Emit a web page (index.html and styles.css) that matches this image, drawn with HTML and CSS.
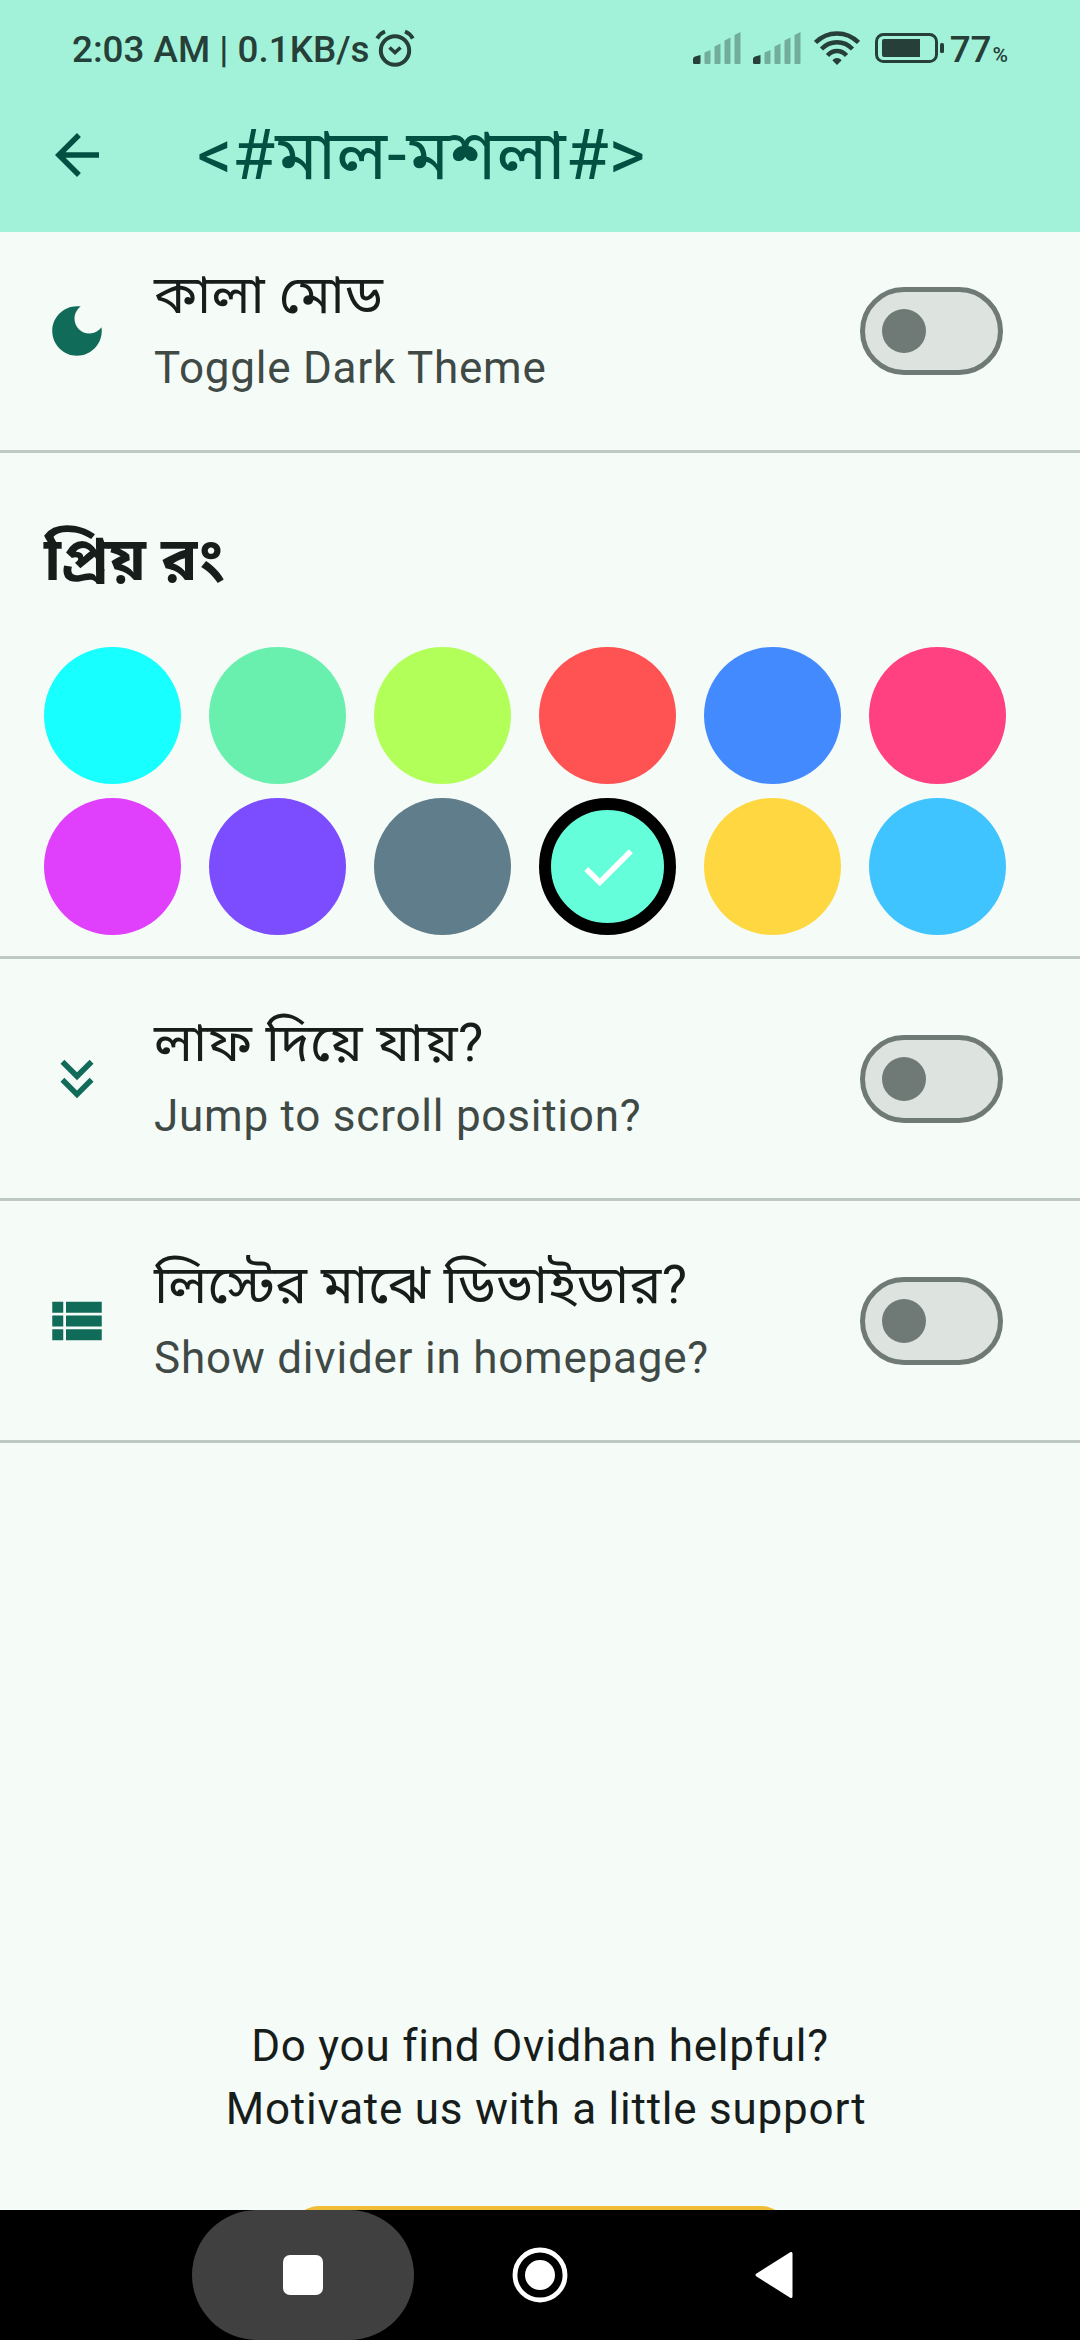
FILE: index.html
```html
<!DOCTYPE html>
<html lang="bn">
<head>
  <meta charset="UTF-8">
  <meta name="viewport" content="width=device-width, initial-scale=1.0">
  <title>Settings</title>
  <link rel="stylesheet" href="styles.css">
</head>
<body>
  <header class="header">
    <div class="status-bar">
      <span class="status-text">2:03 AM | 0.1KB/s</span>
      <svg class="alarm" width="40" height="38" viewBox="0 0 40 38" fill="none" stroke="#263f38">
        <circle cx="20" cy="21.5" r="14.2" stroke-width="4"/>
        <path d="M2.2 9.5Q5 4.500 10 2.500M37.800 9.500Q35 4.500 30 2.500" stroke-width="4"/>
        <path d="M14.500 18.500l5.500 5 5.500-5" stroke-width="3.600"/>
      </svg>
      <div class="status-icons">
        <svg class="signal" width="48" height="32" viewBox="0 0 48 32">
          <path class="on" d="M0 31V27Q0 25 2 24.500L7.500 23V31Q7.500 32 6 32H1.500Q0 32 0 31z"/>
          <path d="M11.500 20.500l6-2.500V31q0 1-1 1h-4q-1 0-1-1zM21.500 14.500l6-3V31q0 1-1 1h-4q-1 0-1-1zM31.500 8.500l6-3V31q0 1-1 1h-4q-1 0-1-1zM41.500 3l6-3V31q0 1-1 1h-4q-1 0-1-1z"/>
        </svg>
        <svg class="signal" width="48" height="32" viewBox="0 0 48 32">
          <path class="on" d="M0 31V27Q0 25 2 24.500L7.500 23V31Q7.500 32 6 32H1.500Q0 32 0 31z"/>
          <path d="M11.500 20.500l6-2.500V31q0 1-1 1h-4q-1 0-1-1zM21.500 14.500l6-3V31q0 1-1 1h-4q-1 0-1-1zM31.500 8.500l6-3V31q0 1-1 1h-4q-1 0-1-1zM41.500 3l6-3V31q0 1-1 1h-4q-1 0-1-1z"/>
        </svg>
        <svg class="wifi" width="46" height="34" viewBox="0 0 46 34" fill="none" stroke="#263f38" stroke-width="4.500">
          <path d="M1.500 11.500Q10.500 2.400 23 2.400T44.500 11.500"/>
          <path d="M7.500 18Q14 11.300 23 11.300T38.500 18"/>
          <path d="M13.500 24.500Q17.500 20 23 20T32.500 24.500"/>
          <path d="M23 27q3.500 0 4.500 2.500L23 34l-4.500-4.500Q19.500 27 23 27z" fill="#263f38" stroke="none"/>
        </svg>
        <svg class="battery" width="70" height="30" viewBox="0 0 70 30">
          <rect x="1.500" y="1.500" width="60" height="27" rx="7" fill="none" stroke="#263f38" stroke-width="3"/>
          <path d="M9 6H45V24H9Q7 24 7 22V8Q7 6 9 6z" fill="#263f38"/>
          <rect x="65" y="10" width="4" height="10" rx="1.500" fill="#263f38"/>
        </svg>
        <span class="status-text">77</span><span class="percent">%</span>
      </div>
    </div>
    <div class="app-bar">
      <svg class="icon back" viewBox="0 0 24 24"><path d="M20 11H7.830l5.590-5.590L12 4l-8 8 8 8 1.410-1.410L7.830 13H20v-2z"/></svg>
      <h1>&lt;#মাল-মশলা#&gt;</h1>
    </div>
  </header>

  <main class="content">
    <section class="row first">
      <svg class="icon" viewBox="0 0 24 24"><path d="M12 3c-4.970 0-9 4.030-9 9s4.030 9 9 9 9-4.030 9-9c0-.46-.04-.92-.1-1.360-.98 1.370-2.580 2.260-4.400 2.260-2.980 0-5.400-2.420-5.400-5.400 0-1.810.89-3.420 2.260-4.400-.44-.06-.9-.1-1.360-.1z"/></svg>
      <div class="row-text">
        <div class="title">কালা মোড</div>
        <div class="subtitle">Toggle Dark Theme</div>
      </div>
      <div class="switch"><div class="thumb"></div></div>
    </section>

    <section class="colors">
      <h2>প্রিয় রং</h2>
      <div class="swatches">
        <div class="swatch cyan"></div>
        <div class="swatch green"></div>
        <div class="swatch lime"></div>
        <div class="swatch red"></div>
        <div class="swatch blue"></div>
        <div class="swatch pink"></div>
        <div class="swatch purple"></div>
        <div class="swatch violet"></div>
        <div class="swatch grey"></div>
        <div class="swatch teal selected">
          <svg class="icon" viewBox="0 0 24 24"><path d="M9 16.170L4.830 12l-1.420 1.410L9 19 21 7l-1.410-1.410L9 16.170z"/></svg>
        </div>
        <div class="swatch amber"></div>
        <div class="swatch sky"></div>
      </div>
    </section>

    <section class="row">
      <svg class="icon" viewBox="0 0 24 24"><path d="M18 6.410L16.590 5 12 9.580 7.410 5 6 6.410l6 6zM18 13l-1.410-1.410L12 16.170l-4.590-4.580L6 13l6 6z"/></svg>
      <div class="row-text">
        <div class="title">লাফ দিয়ে যায়?</div>
        <div class="subtitle">Jump to scroll position?</div>
      </div>
      <div class="switch"><div class="thumb"></div></div>
    </section>

    <section class="row">
      <svg class="icon" viewBox="0 0 24 24"><path d="M3 14h4v-4H3v4zm0 5h4v-4H3v4zM3 9h4V5H3v4zm5 5h13v-4H8v4zm0 5h13v-4H8v4zM8 5v4h13V5H8z"/></svg>
      <div class="row-text">
        <div class="title">লিস্টের মাঝে ডিভাইডার?</div>
        <div class="subtitle">Show divider in homepage?</div>
      </div>
      <div class="switch"><div class="thumb"></div></div>
    </section>

    <section class="support">
      <p>Do you find Ovidhan helpful?</p>
      <p class="second">Motivate us with a little support</p>
      <div class="support-button"></div>
    </section>
  </main>

  <nav class="nav-bar">
    <div class="recent"><div class="square"></div></div>
    <svg class="home" width="56" height="56" viewBox="0 0 56 56">
      <circle cx="28" cy="28" r="25" fill="none" stroke="#fff" stroke-width="4.800"/>
      <circle cx="28" cy="28" r="15" fill="#fff"/>
    </svg>
    <svg class="nav-back" width="38" height="46" viewBox="0 0 38 46">
      <path d="M36 1.500V44.500L2 23z" fill="#fff" stroke="#fff" stroke-width="3" stroke-linejoin="round"/>
    </svg>
  </nav>
</body>
</html>
```
FILE: styles.css
```css
* {
  box-sizing: border-box;
  margin: 0;
  padding: 0;
}
body {
  width: 1080px;
  height: 2340px;
  overflow: hidden;
  display: flex;
  flex-direction: column;
  background-color: #f5fbf7;
  color: #171d1b;
  font-family: Roboto, "Noto Sans Bengali", sans-serif;
}
svg {
  display: block;
  flex: none;
}
.icon {
  width: 66px;
  height: 66px;
  fill: #106b58;
}

/* status bar + app bar */
.header {
  height: 232px;
  flex: none;
  background-color: #a2f2d9;
}
.status-bar {
  height: 77px;
  padding: 0 72px;
  display: flex;
  color: #263f38;
}
.status-text {
  font-size: 36.8px;
  font-weight: 500;
  line-height: 42px;
  margin-top: 29px;
  white-space: nowrap;
}
.alarm {
  margin: 29px 0 0 6px;
}
.status-icons {
  display: flex;
  margin-left: auto;
}
.signal {
  margin: 32px 12px 0 0;
  fill: #72ac9a;
}
.signal .on {
  fill: #263f38;
}
.wifi {
  margin: 31px 15px 0 1px;
}
.battery {
  margin: 33px 5px 0 0;
}
.percent {
  font-size: 21px;
  font-weight: 500;
  line-height: 24px;
  margin: 43px 0 0 1px;
}
.app-bar {
  height: 155px;
  padding-left: 44px;
  display: flex;
  align-items: center;
}
.app-bar .icon {
  fill: #005142;
}
h1 {
  margin-left: 87px;
  font-size: 69.6px;
  font-weight: 400;
  line-height: 90px;
  color: #005142;
  white-space: nowrap;
}

/* settings list */
.content {
  flex: 1;
  min-height: 0;
  overflow: hidden;
}
.row {
  height: 242px;
  padding: 0 77px 0 44px;
  display: flex;
  align-items: center;
  border-bottom: 3px solid #bfc9c4;
}
.row.first {
  margin-top: -21px;
}
.row-text {
  flex: 1;
  margin-left: 44px;
}
.title {
  margin-bottom: 4px;
  font-size: 53.4px;
  line-height: 72px;
  letter-spacing: 0.3px;
}
.subtitle {
  margin-bottom: 1px;
  font-size: 44px;
  line-height: 66px;
  letter-spacing: 0.77px;
  color: #3f4945;
}
.switch {
  width: 143px;
  height: 88px;
  padding-left: 16.5px;
  display: flex;
  align-items: center;
  border: 5.5px solid #6f7975;
  border-radius: 44px;
  background-color: #dde4e0;
}
.thumb {
  width: 44px;
  height: 44px;
  border-radius: 50%;
  background-color: #6f7975;
}

/* colour picker */
.colors {
  height: 506px;
  padding: 62px 44px 0;
  border-bottom: 3px solid #bfc9c4;
}
h2 {
  height: 132px;
  font-size: 60.5px;
  line-height: 90px;
}
.swatches {
  display: grid;
  grid-template-columns: repeat(6, 137px);
  gap: 14px 28px;
}
.swatch {
  height: 137px;
  border-radius: 50%;
}
.selected {
  display: flex;
  align-items: center;
  justify-content: center;
  border: 12.5px solid #000;
}
.selected .icon {
  fill: #fff;
}
.cyan { background-color: #18ffff; }
.green { background-color: #69f0ae; }
.lime { background-color: #b2ff59; }
.red { background-color: #ff5252; }
.blue { background-color: #448aff; }
.pink { background-color: #ff4081; }
.purple { background-color: #e040fb; }
.violet { background-color: #7c4dff; }
.grey { background-color: #607d8b; }
.teal { background-color: #64ffda; }
.amber { background-color: #ffd740; }
.sky { background-color: #40c4ff; }

/* support prompt */
.support {
  padding-top: 572px;
  font-size: 44px;
  line-height: 63px;
  letter-spacing: 0.77px;
  text-align: center;
}
.second {
  padding-left: 12px;
}
.support-button {
  width: 498px;
  height: 110px;
  margin: 65px auto 0;
  border-radius: 28px;
  background-color: #efbd35;
}

/* system navigation */
.nav-bar {
  height: 130px;
  flex: none;
  padding-left: 192px;
  display: flex;
  align-items: center;
  background-color: #000;
}
.recent {
  width: 222px;
  height: 130px;
  display: flex;
  align-items: center;
  justify-content: center;
  border-radius: 65px;
  background-color: #404040;
}
.square {
  width: 40px;
  height: 40px;
  border-radius: 7px;
  background-color: #fff;
}
.home {
  margin-left: 98px;
}
.nav-back {
  margin-left: 187px;
}
```
